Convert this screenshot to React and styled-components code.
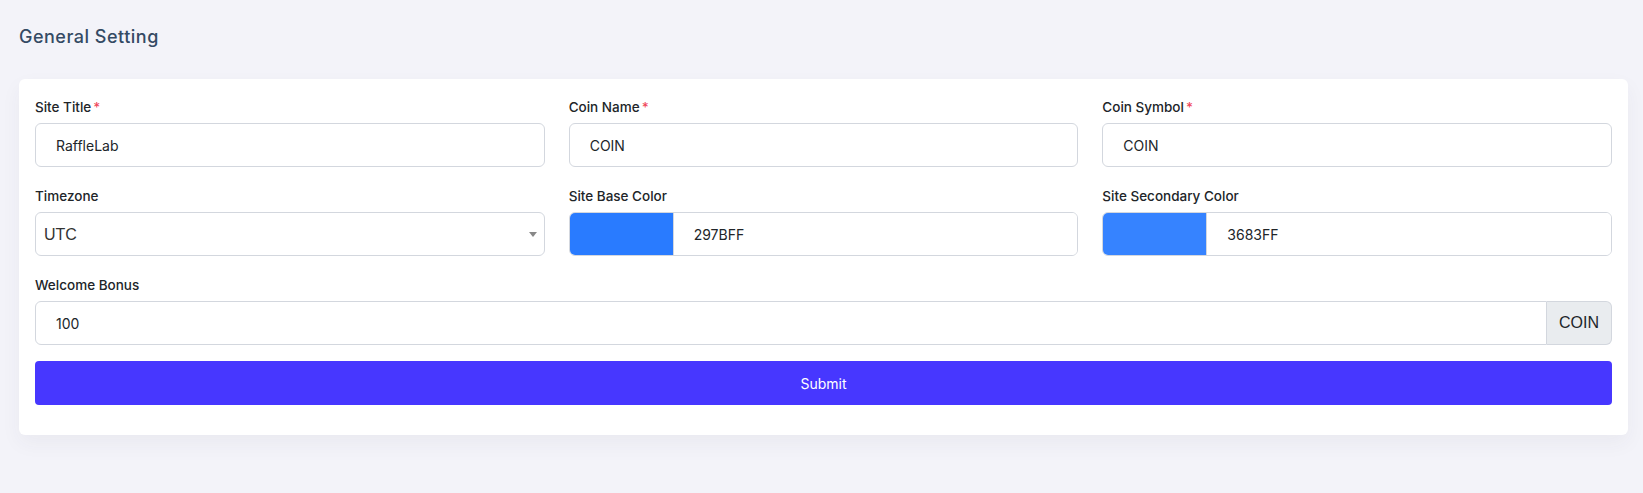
import React from "react";
import styled, { createGlobalStyle } from "styled-components";

const GlobalStyle = createGlobalStyle`
  * { box-sizing: border-box; }
  body {
    margin: 0;
    background: #f3f3f9;
    font-family: Inter, "Noto Sans", sans-serif;
    color: #212529;
  }
`;

const SelectField = ({ options }) => (
  <SelectWrap>
    <Select defaultValue={options[0]}>
      {options.map((o) => (
        <option key={o}>{o}</option>
      ))}
    </Select>
  </SelectWrap>
);

const ColorField = ({ color }) => (
  <ColorGroup>
    <Swatch $color={"#" + color} />
    <ColorText defaultValue={color} />
  </ColorGroup>
);

const App = () => {
  return (
    <Page>
      <GlobalStyle />
      <PageTitle>General Setting</PageTitle>

      <Card>
        <form onSubmit={(e) => e.preventDefault()}>
          <Grid>
            <Field>
              <Label>
                Site Title<Req>*</Req>
              </Label>
              <Input defaultValue="RaffleLab" />
            </Field>

            <Field>
              <Label>
                Coin Name<Req>*</Req>
              </Label>
              <Input defaultValue="COIN" />
            </Field>

            <Field>
              <Label>
                Coin Symbol<Req>*</Req>
              </Label>
              <Input defaultValue="COIN" />
            </Field>

            <Field>
              <Label>Timezone</Label>
              <SelectField options={["UTC"]} />
            </Field>

            <Field>
              <Label>Site Base Color</Label>
              <ColorField color="297BFF" />
            </Field>

            <Field>
              <Label>Site Secondary Color</Label>
              <ColorField color="3683FF" />
            </Field>

            <Field $full>
              <Label>Welcome Bonus</Label>
              <InputGroup>
                <GroupInput defaultValue="100" />
                <Addon>COIN</Addon>
              </InputGroup>
            </Field>
          </Grid>

          <SubmitButton type="submit">Submit</SubmitButton>
        </form>
      </Card>
    </Page>
  );
};

export default App;

const Page = styled.div`
  padding: 23px 15px 40px 19px;
`;

const PageTitle = styled.h4`
  margin: 0 0 29px;
  font-size: 18px;
  font-weight: 500;
  line-height: 27px;
  letter-spacing: 0.5px;
  color: #344a64;
`;

const Card = styled.div`
  background: #fff;
  border-radius: 6px;
  padding: 18px 16px 30px;
  box-shadow: 0 8px 20px rgba(56, 65, 74, 0.05);
`;

const Grid = styled.div`
  display: grid;
  grid-template-columns: repeat(3, 1fr);
  column-gap: 24px;
  row-gap: 19px;
`;

const Field = styled.div`
  display: flex;
  flex-direction: column;
  grid-column: ${(p) => (p.$full ? "1 / -1" : "auto")};
`;

const Label = styled.label`
  display: block;
  font-size: 13.5px;
  font-weight: 500;
  line-height: 21px;
  margin-bottom: 5px;
  color: #212529;
`;

const Req = styled.span`
  color: #f0475a;
  margin-left: 2px;
`;

const Input = styled.input`
  height: 44px;
  width: 100%;
  border: 1px solid #d3d7de;
  border-radius: 6px;
  padding: 0 20px;
  font-family: inherit;
  font-size: 14px;
  color: #212529;
  background: #fff;
  outline: none;
`;

const SelectWrap = styled.div`
  position: relative;

  &::after {
    content: "";
    position: absolute;
    right: 8px;
    top: 20px;
    border-left: 4px solid transparent;
    border-right: 4px solid transparent;
    border-top: 5px solid #888;
    pointer-events: none;
  }
`;

const Select = styled.select`
  appearance: none;
  width: 100%;
  height: 44px;
  border: 1px solid #d3d7de;
  border-radius: 6px;
  padding: 0 24px 0 8px;
  font-family: "Liberation Sans", Arial, sans-serif;
  font-size: 16px;
  color: #333;
  background: #fff;
  outline: none;
`;

const ColorGroup = styled.div`
  display: flex;
  height: 44px;
  border: 1px solid #d3d7de;
  border-radius: 6px;
  overflow: hidden;
`;

const Swatch = styled.div`
  width: 103px;
  flex: none;
  background: ${(p) => p.$color};
`;

const ColorText = styled.input`
  flex: 1;
  min-width: 0;
  border: none;
  border-left: 1px solid #d3d7de;
  padding: 0 20px;
  font-family: inherit;
  font-size: 14px;
  color: #212529;
  outline: none;
`;

const InputGroup = styled.div`
  display: flex;
  height: 44px;
`;

const GroupInput = styled(Input)`
  flex: 1;
  border-radius: 6px 0 0 6px;
`;

const Addon = styled.span`
  display: flex;
  align-items: center;
  padding: 0 12px;
  background: #e9ecef;
  border: 1px solid #d3d7de;
  border-left: none;
  border-radius: 0 6px 6px 0;
  font-family: "Liberation Sans", Arial, sans-serif;
  font-size: 16px;
  color: #212529;
`;

const SubmitButton = styled.button`
  display: block;
  width: 100%;
  height: 44px;
  margin-top: 16px;
  border: none;
  border-radius: 4px;
  background: #4737ff;
  color: #fff;
  font-family: inherit;
  font-size: 14px;
  cursor: pointer;
`;
